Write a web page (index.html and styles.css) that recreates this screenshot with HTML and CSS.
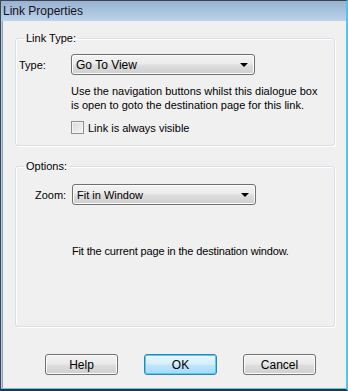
FILE: index.html
```html
<!DOCTYPE html>
<html lang="en">
<head>
  <meta charset="UTF-8" />
  <title>Link Properties</title>
  <link rel="stylesheet" href="styles.css">
</head>
<body>

  <div class="window">
    <div class="titlebar">Link Properties</div>

    <div class="client">

      <fieldset class="group group-type">
        <legend>Link Type:</legend>
        <div class="row">
          <label class="lbl">Type:</label>
          <div class="select">
            <span>Go To View</span>
            <i class="arrow"></i>
          </div>
        </div>
        <p class="hint">Use the navigation buttons whilst this dialogue box<br>is open to goto the destination page for this link.</p>
        <div class="check">
          <span class="box"></span>
          <span>Link is always visible</span>
        </div>
      </fieldset>

      <fieldset class="group group-options">
        <legend>Options:</legend>
        <div class="row row-zoom">
          <label class="lbl">Zoom:</label>
          <div class="select">
            <span>Fit in Window</span>
            <i class="arrow"></i>
          </div>
        </div>
        <p class="desc">Fit the current page in the destination window.</p>
      </fieldset>

      <div class="buttons">
        <button class="btn">Help</button>
        <button class="btn btn-default">OK</button>
        <button class="btn">Cancel</button>
      </div>

    </div>
  </div>

</body>
</html>
```

FILE: styles.css
```css
* {
  box-sizing: border-box;
}

body {
  margin: 0;
  background: #f0f0f0;
  font-family: 'Liberation Sans', Arial, sans-serif;
  font-size: 11px;
  color: #000;
}

.window {
  width: 348px;
  height: 391px;
  border: 1px solid #3c4653;
  border-right: 2px solid #4fc6ee;
  border-bottom: 2px solid #2a3440;
  box-shadow: inset 0 -1px 0 #55c9ef;
  background: #b4cce6;
  display: flex;
  flex-direction: column;
}

.titlebar {
  height: 20px;
  padding: 3px 0 0 2px;
  font-size: 12px;
  color: #15101c;
  background: linear-gradient(#98b2d0, #bbd3ec);
  flex-shrink: 0;
}

.client {
  flex: 1;
  margin: 0 0 1px 1px;
  border-left: 1px solid #8ea3ba;
  background: #f0f0f0;
  padding: 11px 11px 0 12px;
}

/* group boxes */
.group {
  margin: 0;
  padding: 0 0 0 3px;
  border: 1px solid #d5dfe5;
  border-radius: 3px;
  box-shadow: inset 1px 1px 0 #fff, 1px 1px 0 #fff;
}

.group legend {
  padding: 0 2px;
  margin-left: 5px;
  line-height: 13px;
}

.group-type {
  height: 114px;
}

.group-options {
  height: 167px;
  margin-top: 14px;
}

.row {
  display: flex;
  align-items: center;
  margin-top: 9px;
}

.lbl {
  width: 52px;
}

.select {
  width: 184px;
  height: 21px;
  border: 1px solid #707070;
  border-radius: 3px;
  background: linear-gradient(#f3f3f3 0%, #ebebeb 45%, #dddddd 55%, #cfcfcf 100%);
  box-shadow: inset 0 0 0 1px #fcfcfc;
  display: flex;
  align-items: center;
  justify-content: space-between;
  padding: 0 6px 0 4px;
  font-size: 12px;
}

.arrow {
  width: 0;
  height: 0;
  border-left: 4px solid transparent;
  border-right: 4px solid transparent;
  border-top: 4px solid #000;
  margin-top: 1px;
}

.hint {
  margin: 9px 0 0 52px;
  line-height: 14px;
}

.check {
  display: flex;
  align-items: center;
  gap: 4px;
  margin: 9px 0 0 52px;
}

.check .box {
  width: 13px;
  height: 13px;
  border: 1px solid #8f8f8f;
  background: linear-gradient(135deg, #d9d9d9, #f6f6f6);
  box-shadow: inset 0 0 0 1px #f4f4f4;
}

.row-zoom {
  margin-top: 11px;
}

.row-zoom .lbl {
  width: 53px;
  padding-left: 16px;
}

.row-zoom .select {
  font-size: 11px;
}

.desc {
  margin: 40px 0 0 53px;
  letter-spacing: -0.15px;
}

/* dialog buttons */
.buttons {
  display: flex;
  gap: 26px;
  margin: 27px 0 0 30px;
}

.btn {
  width: 73px;
  height: 21px;
  padding: 0;
  font-family: 'Liberation Sans', Arial, sans-serif;
  font-size: 12px;
  color: #000;
  border: 1px solid #707070;
  border-radius: 3px;
  background: linear-gradient(#f2f2f2 0%, #ebebeb 45%, #dddddd 55%, #cfcfcf 100%);
  box-shadow: inset 0 0 0 1px #fcfcfc;
}

.btn-default {
  border-color: #3c7fb1;
  background: linear-gradient(#eaf6fd 0%, #d9f0fc 45%, #bee6fd 55%, #a7d9f5 100%);
  box-shadow: inset 0 0 0 1px #48d1ff;
}
```
